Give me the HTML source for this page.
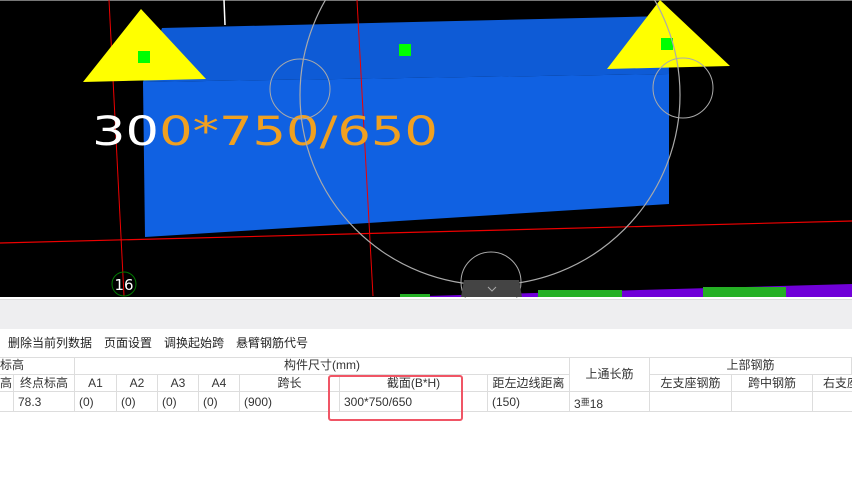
<!DOCTYPE html>
<html><head><meta charset="utf-8"><style>
body{margin:0;width:852px;height:483px;overflow:hidden;background:#fff;font-family:"Liberation Sans","Noto Sans CJK SC",sans-serif;position:relative}
.c{position:absolute;left:0;top:0}
.bar{position:absolute;left:0;top:299px;width:852px;height:29px;background:#eeeef0;border-top:1px solid #ddd}
.tb{position:absolute;top:334px;font-size:12px;color:#222;white-space:nowrap}
.cell{position:absolute;box-sizing:border-box;border-right:1px solid #ddd;border-bottom:1px solid #ddd;font-size:12px;color:#333;white-space:nowrap;line-height:17px;text-align:center;overflow:hidden}
.l{text-align:left;padding-left:4px;line-height:20px}
</style></head><body>
<svg class="c" width="852" height="298">
<rect width="852" height="297" fill="#000"/>
<rect x="0" y="0" width="852" height="1" fill="#777"/>
<polygon points="162,28 668,16 669,74 143,82" fill="#0e5bd6"/>
<polygon points="143,82 669,74 669,204 145,237" fill="#1061e2"/>
<line x1="109" y1="0" x2="124" y2="296" stroke="#e00" stroke-width="1"/>
<line x1="357" y1="0" x2="373" y2="296" stroke="#e00" stroke-width="1"/>
<line x1="0" y1="243" x2="852" y2="221" stroke="#e00" stroke-width="1.2"/>
<line x1="224" y1="0" x2="225" y2="25" stroke="#fff" stroke-width="1.5"/>
<polygon points="141,9 83,82 206,79" fill="#ff0"/>
<polygon points="660,0 607,69 730,66" fill="#ff0"/>
<rect x="138" y="51" width="12" height="12" fill="#0f0"/>
<rect x="399" y="44" width="12" height="12" fill="#0f0"/>
<rect x="661" y="38" width="12" height="12" fill="#0f0"/>
<text x="92" y="145" font-family="DejaVu Sans,sans-serif" font-size="40" fill="#f0a020" textLength="346" lengthAdjust="spacingAndGlyphs"><tspan fill="#fff">30</tspan>0*750/650</text>
<circle cx="490" cy="95" r="190" fill="none" stroke="#aaa" stroke-width="1.2"/>
<circle cx="300" cy="89" r="30" fill="none" stroke="#aaa" stroke-width="1"/>
<circle cx="683" cy="88" r="30" fill="none" stroke="#aaa" stroke-width="1"/>
<circle cx="491" cy="282" r="30" fill="none" stroke="#aaa" stroke-width="1"/>
<polygon points="426,296 852,284 852,297 426,297" fill="#7000d8"/>
<rect x="538" y="290" width="84" height="7" fill="#25b025"/>
<rect x="703" y="287" width="83" height="10" fill="#25b025"/>
<rect x="400" y="294" width="30" height="3" fill="#25b025"/>
<path d="M464,280 L519,280 L522,297 L461,297 Z" fill="#444"/>
<path d="M488,287 L492,291 L496,287" fill="none" stroke="#aaa" stroke-width="1"/>
<circle cx="124" cy="284" r="12" fill="none" stroke="#070" stroke-width="1"/>
<text x="124" y="290" font-size="15" fill="#fff" text-anchor="middle" font-family="DejaVu Sans,sans-serif">16</text>
</svg>
<div class="bar"></div>
<div class="tb" style="left:8px">删除当前列数据</div>
<div class="tb" style="left:104px">页面设置</div>
<div class="tb" style="left:164px">调换起始跨</div>
<div class="tb" style="left:236px">悬臂钢筋代号</div>
<div style="position:absolute;left:0;top:357px;width:852px;border-top:1px solid #ddd"></div>
<div class="cell" style="left:0;top:357px;width:75px;height:18px;text-align:left">标高</div>
<div class="cell" style="left:75px;top:357px;width:495px;height:18px">构件尺寸(mm)</div>
<div class="cell" style="left:570px;top:357px;width:80px;height:35px;line-height:35px">上通长筋</div>
<div class="cell" style="left:650px;top:357px;width:202px;height:18px">上部钢筋</div>
<div class="cell" style="left:0;top:375px;width:14px;height:17px;text-align:left">高</div>
<div class="cell" style="left:14px;top:375px;width:61px;height:17px">终点标高</div>
<div class="cell" style="left:75px;top:375px;width:42px;height:17px">A1</div>
<div class="cell" style="left:117px;top:375px;width:41px;height:17px">A2</div>
<div class="cell" style="left:158px;top:375px;width:41px;height:17px">A3</div>
<div class="cell" style="left:199px;top:375px;width:41px;height:17px">A4</div>
<div class="cell" style="left:240px;top:375px;width:100px;height:17px">跨长</div>
<div class="cell" style="left:340px;top:375px;width:148px;height:17px">截面(B*H)</div>
<div class="cell" style="left:488px;top:375px;width:82px;height:17px">距左边线距离</div>
<div class="cell" style="left:650px;top:375px;width:82px;height:17px">左支座钢筋</div>
<div class="cell" style="left:732px;top:375px;width:81px;height:17px">跨中钢筋</div>
<div class="cell" style="left:813px;top:375px;width:60px;height:17px;text-align:left;padding-left:10px">右支座</div>
<div class="cell l" style="left:0;top:392px;width:14px;height:20px"></div>
<div class="cell l" style="left:14px;top:392px;width:61px;height:20px">78.3</div>
<div class="cell l" style="left:75px;top:392px;width:42px;height:20px">(0)</div>
<div class="cell l" style="left:117px;top:392px;width:41px;height:20px">(0)</div>
<div class="cell l" style="left:158px;top:392px;width:41px;height:20px">(0)</div>
<div class="cell l" style="left:199px;top:392px;width:41px;height:20px">(0)</div>
<div class="cell l" style="left:240px;top:392px;width:100px;height:20px">(900)</div>
<div class="cell l" style="left:340px;top:392px;width:148px;height:20px">300*750/650</div>
<div class="cell l" style="left:488px;top:392px;width:82px;height:20px">(150)</div>
<div class="cell l" style="left:570px;top:392px;width:80px;height:20px">3<span style="font-size:9px;vertical-align:3px">亜</span>18</div>
<div class="cell l" style="left:650px;top:392px;width:82px;height:20px"></div>
<div class="cell l" style="left:732px;top:392px;width:81px;height:20px"></div>
<div class="cell l" style="left:813px;top:392px;width:60px;height:20px"></div>
<div style="position:absolute;left:328px;top:375px;width:131px;height:42px;border:2.5px solid #f05565;border-radius:3px"></div>
</body></html>
